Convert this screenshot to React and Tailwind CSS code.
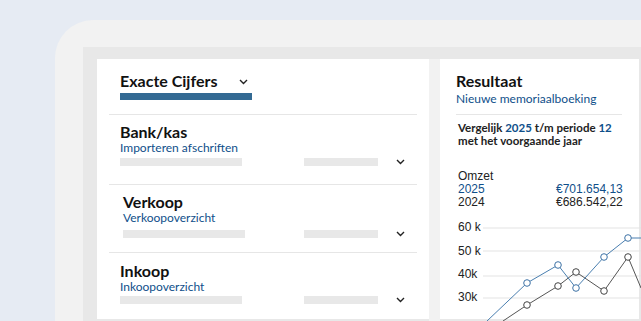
import React from 'react';

const head = { fontFamily: 'Lato, "Open Sans", sans-serif' };
const body = { fontFamily: '"Liberation Sans", Arial, sans-serif' };

function Chevron({ className = '' }) {
  return (
    <svg width="9" height="6" viewBox="0 0 9 6" className={className}>
      <polyline points="1,1 4.5,4.5 8,1" fill="none" stroke="#222" strokeWidth="1.4" />
    </svg>
  );
}

function Bars({ className = '', shift = 'ml-[62px]' }) {
  return (
    <div className={`flex items-center h-[8px] ${className}`}>
      <div className="w-[122px] h-[8px] bg-[#e8e8e8]" />
      <div className={`${shift} w-[74px] h-[8px] bg-[#e8e8e8]`} />
      <Chevron className="ml-[18px]" />
    </div>
  );
}

function Section({ title, sub, pad, pt, gap, height, shift }) {
  return (
    <div className={`${height} ${pad} ${pt}`}>
      <div className="text-[16px] leading-[18px] font-bold text-[#111]">{title}</div>
      <div className="text-[12px] leading-[13px] text-[#0f4f8a]">{sub}</div>
      <Bars className={gap} shift={shift} />
    </div>
  );
}

const blue = [[87, 68], [118, 50], [136, 73], [164, 42], [188, 23]];
const black = [[87, 90], [118, 71], [136, 57], [164, 76], [188, 42]];

function Chart() {
  const line = (pts, start, end) => [start, ...pts, end].map(p => p.join(',')).join(' ');
  return (
    <svg width="199" height="104" className="mt-auto block overflow-visible">
      {[13, 36, 61, 83].map(y => (
        <line key={y} x1="43" x2="201" y1={y} y2={y} stroke="#e3e3e3" strokeWidth="1" />
      ))}
      {[['60 k', 16], ['50 k', 40], ['40k', 63], ['30k', 86]].map(([t, y]) => (
        <text key={t} x="18" y={y} fontSize="12" fill="#222" style={body}>{t}</text>
      ))}
      <polyline points={line(black, [63, 106], [201, 73])} fill="none" stroke="#555" strokeWidth="1" />
      <polyline points={line(blue, [47, 106], [201, 23])} fill="none" stroke="#4a7fb0" strokeWidth="1" />
      {black.map(([x, y], i) => (
        <circle key={'k' + i} cx={x} cy={y} r="3.3" fill="#fff" stroke="#444" strokeWidth="1" />
      ))}
      {blue.map(([x, y], i) => (
        <circle key={'b' + i} cx={x} cy={y} r="3.3" fill="#fff" stroke="#3d72a6" strokeWidth="1" />
      ))}
    </svg>
  );
}

export default function App() {
  return (
    <div className="w-[641px] h-[321px] overflow-hidden bg-[#e6ebf3] pl-[55px] pt-[20px]" style={head}>
      <div className="h-full rounded-tl-[38px] bg-[#f2f2f2] pl-[28px] pt-[27px]">
        <div className="h-full bg-[#e8e8e8] pl-[14px] pt-[12px] flex items-start">
          {/* left card */}
          <div className="w-[332px] h-[260px] bg-white flex flex-col">
            <div className="h-[55px] pl-[23px] pt-[13px]">
              <div className="flex items-center">
                <span className="text-[16px] leading-[18px] font-bold text-[#111]">Exacte Cijfers</span>
                <Chevron className="ml-[22px] mt-[2px]" />
              </div>
              <div className="mt-[3px] w-[132px] h-[7px] bg-[#336a93]" />
            </div>
            <div className="mx-[12px] h-px bg-[#e6e6e6]" />
            <Section title="Bank/kas" sub="Importeren afschriften" pad="pl-[23px]" pt="pt-[8px]" gap="mt-[4px]" height="h-[69px]" />
            <div className="mx-[12px] h-px bg-[#e6e6e6]" />
            <Section title="Verkoop" sub="Verkoopoverzicht" pad="pl-[26px]" pt="pt-[8px]" gap="mt-[6px]" height="h-[67px]" shift="ml-[59px]" />
            <div className="mx-[12px] h-px bg-[#e6e6e6]" />
            <Section title="Inkoop" sub="Inkoopoverzicht" pad="pl-[23px]" pt="pt-[9px]" gap="mt-[3px]" height="h-[66px]" />
          </div>
          <div className="w-[11px] h-[262px] bg-[#f2f2f2]" />
          {/* right card */}
          <div className="w-[199px] h-[260px] bg-white flex flex-col">
            <div className="pl-[16px] pt-[13px]">
              <div className="text-[16px] leading-[18px] font-bold text-[#111]">Resultaat</div>
              <div className="mt-[2px] text-[12px] leading-[13px] text-[#0f4f8a]">Nieuwe memoriaalboeking</div>
            </div>
            <div className="mt-[9px] ml-[16px] mr-[17px] h-px bg-[#e6e6e6]" />
            <div className="pl-[18px] mt-[6px] text-[11.5px] leading-[13px] font-bold text-[#222]">
              <p>
                Vergelijk <span className="text-[#0f4f8a]">2025</span> t/m periode <span className="text-[#0f4f8a]">12</span>
              </p>
              <p>met het voorgaande jaar</p>
            </div>
            <div className="pl-[18px] mt-[23px] text-[12px] leading-[13px] text-[#222]" style={body}>
              <div>Omzet</div>
              <div className="flex text-[#0f4f8a]">
                <span className="w-[98px]">2025</span>
                <span>€701.654,13</span>
              </div>
              <div className="flex">
                <span className="w-[98px]">2024</span>
                <span>€686.542,22</span>
              </div>
            </div>
            <Chart />
          </div>
        </div>
      </div>
    </div>
  );
}
